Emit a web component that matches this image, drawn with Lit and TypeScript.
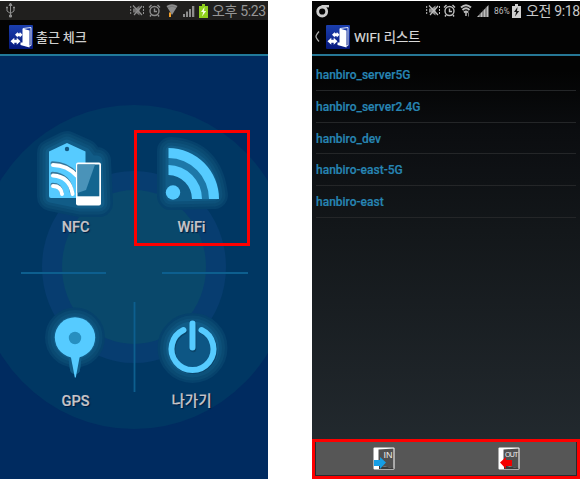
import { LitElement, html, css, svg } from "lit";
import { customElement, property } from "lit/decorators.js";

const door = html`<svg class="door" width="24" height="24" viewBox="0 0 24 24">
  <defs><linearGradient id="b" x2="0" y2="1"><stop stop-color="#1b3fae"/><stop offset="1" stop-color="#06187c"/></linearGradient></defs>
  <rect width="24" height="24" rx="1" fill="url(#b)"/>
  <path d="M14 3.500L22 2.500v18l-2 .5" fill="none" stroke="#dfe6fa"/>
  <path d="M13.500 3.500l7 2v17l-9-2.500v-2.500h2z" fill="#fff"/>
  <path d="M6 9.800l2.800-2.800v1.300h2V7l2.700 2.800-2.700 2.700v-1.300h-2v1.300z" fill="#fff"/>
  <path d="M1.500 16.200l3.800-3.500v2h2.400v-2l3.800 3.500-3.800 3.500v-2H5.300v2z" fill="#fff"/>
</svg>`;

const mute = svg`<g fill="none" stroke="currentColor">
  <path d="M3 4.500h2.500L9.500 1.500v10L5.500 8.500H3z" fill="currentColor" fill-opacity=".75" stroke="none"/>
  <path d="M3 1.500l9 9.500M12 2l-8 9" stroke-width="1.200"/><path d="M.7 2v9M13.500 2v9" stroke-dasharray="2 1"/></g>`;
const alarm = svg`<g fill="none" stroke="currentColor" stroke-width="1.400">
  <circle cx="6.500" cy="7" r="4.500"/><path d="M6.500 4.500V7.500h2.500M1 3.500L3.500 1M12 3.500L9.500 1M3 11l-1 1.500M10 11l1 1.500"/></g>`;
const bars = svg`<path fill="currentColor" d="M0 10h2v3H0zM3 7.500h2V13H3zM6 5h2v8H6zM9 2h2.300v11H9z"/>`;

@customElement("status-bar")
class StatusBar extends LitElement {
  @property() kind = "left";
  static styles = css`
    :host { display: flex; height: 19px; align-items: center; color: #8d8d8d; background: #201f1e; }
    :host([kind="right"]) { background: #030303; color: #bdbdbd; }
    svg { display: block; flex: none; }
    .gap { flex: 1; }
    .usb { margin-left: 5px; }
    .carrier { margin-left: 4px; }
    .m { margin-right: 4px; }
    .a { margin-right: 5px; }
    .w { margin-right: 5px; }
    .s { margin-right: 4px; }
    .b { margin-right: 4px; }
    .time { font: 14px/18px Roboto, "Noto Sans CJK KR", sans-serif; width: 56px; white-space: nowrap; letter-spacing: -0.350px; color: #969696; }
    .pct { font: 8.500px/18px Roboto, sans-serif; width: 18px; white-space: nowrap; }
    :host([kind="right"]) .m { margin-right: 3px; }
    :host([kind="right"]) .a { margin-right: 4px; }
    :host([kind="right"]) .w { margin-right: 5px; }
    :host([kind="right"]) .s { margin-right: 5px; }
    :host([kind="right"]) .b { margin-right: 5px; }
    :host([kind="right"]) .time { width: 54px; color: #c8c8c8; }
  `;
  render() {
    const left = this.kind === "left";
    return html`
      ${left
        ? html`<svg class="usb" width="11" height="15" viewBox="0 0 11 15"><g fill="none" stroke="currentColor"><path d="M5.500 1v12M2 5v3l3.500 2.500L9 8V5"/><path d="M5.500 0L4 2.500h3zM4.500 12h2v2h-2zM1.500 4h1v1h-1zM8.500 4h1v1h-1z" fill="currentColor"/></g></svg>`
        : html`<svg class="carrier" width="14" height="14" viewBox="0 0 14 14"><path d="M5.500 2.200H13" fill="none" stroke="#ccc" stroke-width="2.400"/><circle cx="6.200" cy="7.500" r="4.500" fill="none" stroke="#ccc" stroke-width="2.800"/></svg>`}
      <span class="gap"></span>
      <svg class="m" width="14" height="13" viewBox="0 0 14 13">${mute}</svg>
      <svg class="a" width="13" height="13" viewBox="0 0 13 13">${alarm}</svg>
      <svg class="w" width="12" height="15" viewBox="0 0 12 15">
        ${left
          ? svg`<path d="M.5 3Q6 -.5 11.500 3L6 12z" fill="currentColor"/><path d="M1.500 4.700Q6 1.700 10.500 4.700" fill="none" stroke="#555" stroke-width=".4"/><path d="M3 9.500h2V14H3z" fill="#f2a02b"/>`
          : svg`<path d="M1 4.500Q6 0 11 4.500M2.500 7Q6 3.500 9.500 7M4 9.500Q6 7.500 8 9.500" fill="none" stroke="currentColor" stroke-width="1.900"/><path d="M6 9v4" stroke="currentColor" stroke-width="1.500"/><path d="M8.500 9.500v4" stroke="#777"/>`}
      </svg>
      <svg class="s" width="12" height="13" viewBox="0 0 12 13">${left ? bars : svg`<path d="M0 13L11.500 1v12z" fill="currentColor"/><path d="M3 8v5M6 5v8M9 2v11" stroke="#222" stroke-width=".7"/>`}</svg>
      ${left ? "" : html`<span class="pct">86%</span>`}
      <svg class="b" width="9" height="14" viewBox="0 0 9 14">
        <path d="M0 2h3V0h3v2h3v12H0z" fill=${left ? "#8fd01c" : "#cfcfcf"}/>
        <path d="M5.500 3L2 8h2.200L3 12.500 7.200 7H5z" fill=${left ? "#f6ffe0" : "#111"}/>
      </svg>
      <span class="time">${left ? "오후 5:23" : "오전 9:18"}</span>`;
  }
}

@customElement("check-screen")
class CheckScreen extends LitElement {
  static styles = css`
    :host { display: flex; flex-direction: column; width: 268px; background: #002b60; }
    .bar { display: flex; align-items: center; height: 36px; box-sizing: border-box; padding: 0 0 1px 9px; gap: 3px; background: #030303; border-bottom: 2px solid #217a9a;
      font: 500 13px/20px "Noto Sans CJK KR", sans-serif; color: #cfcfcf; }
    .bar span { padding-top: 1px; }
    .body { position: relative; flex: 1; display: grid; grid-template-columns: 116px 116px; grid-template-rows: 116px 58px 116px;
      padding: 74px 0 0 18px; }
    .backdrop { position: absolute; left: 0; top: 0; }
    .tile { position: relative; display: flex; flex-direction: column; align-items: center; box-sizing: border-box; }
    .tile svg { flex: none; overflow: visible; width: 116px; height: 87px; }
    .label { font: 500 14.500px/20px Roboto, "Noto Sans CJK KR", sans-serif; color: #c6c4c8; text-shadow: 1px 1px 1px #00183c; padding: 1px 1px 0 0; -webkit-text-stroke: 0.200px #c6c4c8; }
    .boxed { outline: 3px solid #fe0000; outline-offset: -3px; }
    .row2 { grid-row: 3; }
  `;
  halo(shape: unknown) {
    const steps: [number, string][] = [[28, "#06426c"], [23, "#0a4a72"], [17, "#0d517a"], [11, "#115c87"]];
    return steps.map(([w, c]) => svg`<g fill=${c} stroke=${c} stroke-width=${w} stroke-linejoin="round" stroke-linecap="round">${shape}</g>`);
  }
  render() {
    return html`
      <status-bar kind="left"></status-bar>
      <div class="bar">${door}<span>출근 체크</span></div>
      <div class="body">
        <svg class="backdrop" width="268" height="423" viewBox="0 56 268 423">
          <ellipse cx="134" cy="267" rx="158" ry="162" fill="#003763"/>
          <ellipse cx="134" cy="267" rx="92" ry="96" fill="#073d70"/>
          <ellipse cx="134" cy="267" rx="72" ry="77" fill="#09486b"/>
          <path d="M21 273h85M162 273h86M134.500 302v90" stroke="#0d5f8f" stroke-width="1.800" fill="none"/>
        </svg>
        <div class="tile">
          <svg viewBox="18 130 116 87">
            ${this.halo(svg`<path d="M51 153l16-8 18 8 6 8h6l2 42H80l-29-6z"/>`)}
            <path d="M49 151.500L67 143l18.500 8.500V198H51q-2 0-2-2z" fill="#56cbff"/>
            <circle cx="67" cy="149" r="2.200" fill="#135a84"/>
            <g fill="none" stroke-width="4" stroke-linecap="round">
              <path d="M52.500 164q14 0 24 11M52.500 174.500q17 1 19.500 19.500M52.500 185.500q8 0 9 8" stroke="#35779b" transform="translate(0 -.8)"/>
              <path d="M53 165q14 0 24 11M53 175.500q17 1 19.500 18.500M53 186q8 0 9 8" stroke="#fff"/>
            </g>
            <rect x="76" y="162.500" width="25" height="43" rx="2" fill="#fff"/>
            <path d="M77.500 164.500h21.800v31.800H77.500z" fill="#136590"/>
            <path d="M77.500 164.500H95L86 190l-8.500 3z" fill="#4a93b9"/>
          </svg>
          <span class="label">NFC</span>
        </div>
        <div class="tile boxed">
          <svg viewBox="134 130 116 87">
            ${this.halo(svg`<path d="M171 151Q209 153 214 195L171 196z"/>`)}
            <path d="M168.500 157.500Q210 158 213 199H198Q197 171 168.500 168z" fill="#1d78a8"/>
            <path d="M168.500 148A51 51 0 0 1 219 199H209A41 41 0 0 0 168.500 158z" fill="#56cbff"/>
            <path d="M168.500 165A34 34 0 0 1 202 199H192A24 24 0 0 0 168.500 175z" fill="#56cbff"/>
            <circle cx="173" cy="192.500" r="7.200" fill="#56cbff"/>
          </svg>
          <span class="label">WiFi</span>
        </div>
        <div class="tile row2">
          <svg viewBox="18 304 116 87">
            ${this.halo(svg`<circle cx="75" cy="337.500" r="16"/><path d="M73 355l2 14 2-14z" stroke-width="10"/>`)}
            <circle cx="75" cy="337.500" r="20.200" fill="#56cbff"/>
            <path d="M70.500 355h9.500l-4.200 22.500h-1z" fill="#56cbff"/>
            <circle cx="75" cy="338" r="6.200" fill="#278fc0"/>
          </svg>
          <span class="label">GPS</span>
        </div>
        <div class="tile row2">
          <svg viewBox="134 304 116 87">
            ${this.halo(svg`<circle cx="192.500" cy="348" r="21"/>`)}
            <circle cx="192.500" cy="349" r="19" fill="#0d5684"/>
            <g fill="none" stroke-width="6" stroke-linecap="round">
              <path d="M183.500 330A21 21 0 1 0 201.500 330M192.500 324v24" stroke="#0a456b" transform="translate(.8 1.200)"/>
              <path d="M183.500 330A21 21 0 1 0 201.500 330M192.500 323.500v24" stroke="#56cbff"/>
            </g>
          </svg>
          <span class="label">나가기</span>
        </div>
      </div>`;
  }
}

@customElement("wifi-screen")
class WifiScreen extends LitElement {
  static styles = css`
    :host { display: flex; flex-direction: column; width: 268px; background: linear-gradient(#030303 0, #030303 70px, #0b0d10 130px, #13171a 230px, #22292e 440px); }
    .bar { display: flex; align-items: center; height: 36px; box-sizing: border-box; padding: 0 0 1px 3px; border-bottom: 2px solid #267795; background: #030303;
      font: 13.300px/20px Roboto, "Noto Sans CJK KR", sans-serif; color: #dadada; -webkit-text-stroke: 0.200px #dadada; }
    .bar span { padding-top: 2px; }
    .back { margin-right: 6px; }
    .door { margin-right: 4px; }
    .bar svg { flex: none; }
    .list { flex: 1; padding: 3px 4px 0; }
    .item { height: 31.800px; box-sizing: border-box; border-bottom: 1px solid #242628; font: 500 12px/33px Roboto, sans-serif; color: #2785b3; -webkit-text-stroke: 0.200px #2785b3; }
    .actions { height: 40px; box-sizing: border-box; border: 3px solid #fe0000; background: #262b2f; padding: 0 1px 1px; display: flex; }
    .inner { flex: 1; display: grid; grid-template-columns: 1fr 1fr; padding: 0 4px 0 5px; background: #565656; align-items: center; justify-items: center; }
    .inner svg { overflow: visible; }
    .label { font: 8px "Liberation Sans", sans-serif; fill: #eee; }
    .in { font-size: 9px; }
    .out { font-size: 7px; letter-spacing: -0.700px; }
  `;
  icon(out: boolean) {
    return html`<svg width="22" height="23" viewBox="0 0 22 23">
      <rect x=".5" y=".5" width="21" height="22" rx="1" fill="#fff"/>
      <path d="M5.500 2.500L20.500 1.500v20L5.500 18z" fill="#505050"/>
      <path d="M6 18.500l14.500 2.500v1H6z" fill="#3a3a3a"/>
      ${out
        ? svg`<path d="M2 15.500L8 10v3h6v6H8v3z" fill="#f40000"/><text class="label out" x="7" y="9.500">OUT</text>`
        : svg`<path d="M13 15.500L7 10v3H1v6h6v3z" fill="#159ee5"/><text class="label in" x="10.500" y="11">IN</text>`}
    </svg>`;
  }
  render() {
    return html`
      <status-bar kind="right"></status-bar>
      <div class="bar">
        <svg class="back" width="5" height="11" viewBox="0 0 5 11"><path d="M4 .5Q1 4 1 5.500T4 10.500" fill="none" stroke="#aaa" stroke-width="1.300"/></svg>
        ${door}<span>WIFI 리스트</span>
      </div>
      <div class="list">
        ${["hanbiro_server5G", "hanbiro_server2.4G", "hanbiro_dev", "hanbiro-east-5G", "hanbiro-east"].map((n) => html`<div class="item">${n}</div>`)}
      </div>
      <div class="actions"><div class="inner">${this.icon(false)}${this.icon(true)}</div></div>`;
  }
}

@customElement("app-root")
class AppRoot extends LitElement {
  static styles = css`
    :host { display: flex; box-sizing: border-box; width: 581px; height: 479px; padding-top: 1px; gap: 44px; background: #fff; overflow: hidden; }
  `;
  render() {
    return html`<check-screen></check-screen><wifi-screen></wifi-screen>`;
  }
}
